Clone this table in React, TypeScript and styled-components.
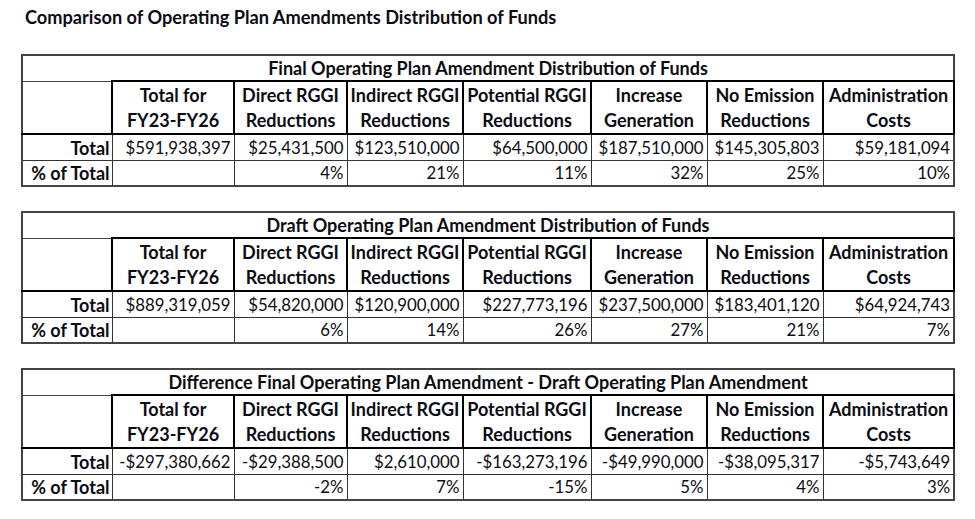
import styled, {createGlobalStyle} from "styled-components";


interface Section{
    title: string;
    totals: string[];
    shares: string[];
}

const headers: string[][] = [
    ["Total for", "FY23-FY26"],
    ["Direct RGGI", "Reductions"],
    ["Indirect RGGI", "Reductions"],
    ["Potential RGGI", "Reductions"],
    ["Increase", "Generation"],
    ["No Emission", "Reductions"],
    ["Administration", "Costs"],
];

const widths = [90, 122, 113, 116, 128, 116, 116, 131];

const sections: Section[] = [
    {
        title: "Final Operating Plan Amendment Distribution of Funds",
        totals: ["$591,938,397", "$25,431,500", "$123,510,000", "$64,500,000", "$187,510,000", "$145,305,803", "$59,181,094"],
        shares: ["", "4%", "21%", "11%", "32%", "25%", "10%"],
    },
    {
        title: "Draft Operating Plan Amendment Distribution of Funds",
        totals: ["$889,319,059", "$54,820,000", "$120,900,000", "$227,773,196", "$237,500,000", "$183,401,120", "$64,924,743"],
        shares: ["", "6%", "14%", "26%", "27%", "21%", "7%"],
    },
    {
        title: "Difference Final Operating Plan Amendment - Draft Operating Plan Amendment",
        totals: ["-$297,380,662", "-$29,388,500", "$2,610,000", "-$163,273,196", "-$49,990,000", "-$38,095,317", "-$5,743,649"],
        shares: ["", "-2%", "7%", "-15%", "5%", "4%", "3%"],
    },
];


function FundsTable({section}: {section: Section}){
    return(
        <Table>
            <colgroup>
                {widths.map((w, i) => <col key={i} style={{width: w}}/>)}
            </colgroup>
            <tbody>
                <tr>
                    <TitleCell colSpan={8}>{section.title}</TitleCell>
                </tr>
                <tr>
                    <BlankHeadCell/>
                    {headers.map((h, i) => (
                        <HeadCell key={i}>{h[0]}<br/>{h[1]}</HeadCell>
                    ))}
                </tr>
                <tr>
                    <LabelCell $h={25}>Total</LabelCell>
                    {section.totals.map((v, i) => <ValueCell key={i}>{v}</ValueCell>)}
                </tr>
                <tr>
                    <LabelCell $h={24}>% of Total</LabelCell>
                    {section.shares.map((v, i) => <ValueCell key={i}>{v}</ValueCell>)}
                </tr>
            </tbody>
        </Table>
    )
}


function App(){
    return(
        <Page>
            <GlobalStyle/>
            <PageTitle>Comparison of Operating Plan Amendments Distribution of Funds</PageTitle>
            <Tables>
                {sections.map((s, i) => <FundsTable key={i} section={s}/>)}
            </Tables>
        </Page>
    )
}


const GlobalStyle = createGlobalStyle`
    body{
        margin: 0;
        background-color: white;
        font-family: Lato, "Open Sans", sans-serif;
        color: #0c0c14;
    }
`

const Page = styled.div`
    width: 975px;
    height: 519px;
    padding: 7px 0 0 21px;
    box-sizing: border-box;
`

const PageTitle = styled.h1`
    margin: 0 0 0 4px;
    font-size: 18.2px;
    font-weight: 700;
    line-height: 20px;
`

const Tables = styled.div`
    display: flex;
    flex-direction: column;
    gap: 24px;
    margin-top: 27px;
`

const Table = styled.table`
    border-collapse: collapse;
    table-layout: fixed;
    width: 932px;
    font-size: 16.8px;
    line-height: 20px;
    border: 2px solid #444;
`

const TitleCell = styled.td`
    height: 24px;
    padding: 0;
    text-align: center;
    font-size: 18px;
    font-weight: 700;
    border: 1px solid #444;
`

const HeadCell = styled.td`
    height: 51px;
    padding: 0;
    text-align: center;
    font-size: 18px;
    font-weight: 700;
    line-height: 25px;
    border: 2px solid #000;
    white-space: nowrap;
`

const BlankHeadCell = styled.td`
    padding: 0;
    border-left: 2px solid #444;
    border-right: 2px solid #000;
    border-bottom: 2px solid #000;
`

const LabelCell = styled.td<{$h: number}>`
    height: ${p => p.$h}px;
    padding: 0 2px 0 0;
    text-align: right;
    font-size: 18px;
    font-weight: 700;
    white-space: nowrap;
    border: 1px solid #333;
`

const ValueCell = styled.td`
    padding: 0 3px 0 0;
    text-align: right;
    white-space: nowrap;
    border: 1px solid #333;
`


export default App;
